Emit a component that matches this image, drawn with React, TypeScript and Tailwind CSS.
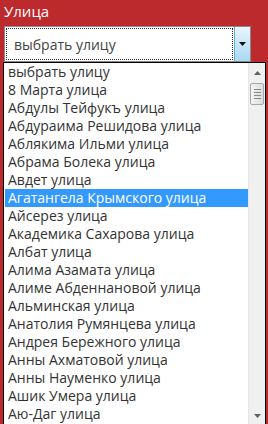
import React from 'react';

const streets = [
  'выбрать улицу',
  '8 Марта улица',
  'Абдулы Тейфукъ улица',
  'Абдураима Решидова улица',
  'Аблякима Ильми улица',
  'Абрама Болека улица',
  'Авдет улица',
  'Агатангела Крымского улица',
  'Айсерез улица',
  'Академика Сахарова улица',
  'Албат улица',
  'Алима Азамата улица',
  'Алиме Абденнановой улица',
  'Альминская улица',
  'Анатолия Румянцева улица',
  'Андрея Бережного улица',
  'Анны Ахматовой улица',
  'Анны Науменко улица',
  'Ашик Умера улица',
  'Аю-Даг улица',
];

export default function App() {
  return (
    <div className="w-[268px] h-[424px] overflow-hidden bg-[#bd2a2e] font-['Open_Sans',sans-serif]">
      {/* Label */}
      <div className="h-[26px] pl-[4px] pt-[1px] text-[15px] leading-[20px] text-white">Улица</div>

      {/* Select */}
      <div className="ml-[4px] w-[247px] h-[36px] flex bg-white border border-[#8a8a8a]">
        <div className="flex-1 m-[1px] border border-dotted border-[#333] flex items-center pl-[7px] text-[14px] text-[#444]">
          выбрать улицу
        </div>
        <div className="w-[16px] flex items-center justify-center bg-gradient-to-b from-[#eaf6fd] to-[#a7d8f5] border-l border-[#6aaad6]">
          <svg width="7" height="4" viewBox="0 0 7 4">
            <path d="M0 0h7L3.5 4z" fill="#111" />
          </svg>
        </div>
      </div>

      {/* Dropdown list */}
      <div className="ml-[3px] w-[263px] h-[362px] flex bg-white border-x border-t border-black">
        <div className="flex-1 pl-[1px]">
          {streets.map((s, i) => (
            <div
              key={s}
              className={
                'h-[18px] pl-[3px] text-[14px] leading-[18px] whitespace-nowrap ' +
                (i === 7 ? 'bg-[#3399ff] text-white' : 'text-[#333]')
              }
            >
              {s}
            </div>
          ))}
        </div>

        {/* Scrollbar */}
        <div className="w-[17px] flex flex-col bg-[#f0f0f0] border-l border-[#e6e6e6]">
          <div className="h-[20px] flex items-center justify-center">
            <svg width="7" height="4" viewBox="0 0 7 4">
              <path d="M3.5 0L7 4H0z" fill="#606060" />
            </svg>
          </div>
          <div className="mx-[1px] h-[22px] rounded-[2px] border border-[#a8a8a8] bg-gradient-to-r from-[#f4f4f4] to-[#dcdcdc] flex flex-col items-center justify-center gap-[2px]">
            <div className="w-[7px] h-[1px] bg-[#888]" />
            <div className="w-[7px] h-[1px] bg-[#888]" />
            <div className="w-[7px] h-[1px] bg-[#888]" />
            <div className="w-[7px] h-[1px] bg-[#888]" />
          </div>
          <div className="flex-1" />
          <div className="h-[17px] flex items-center justify-center">
            <svg width="7" height="4" viewBox="0 0 7 4">
              <path d="M0 0h7L3.5 4z" fill="#606060" />
            </svg>
          </div>
        </div>
      </div>
    </div>
  );
}
